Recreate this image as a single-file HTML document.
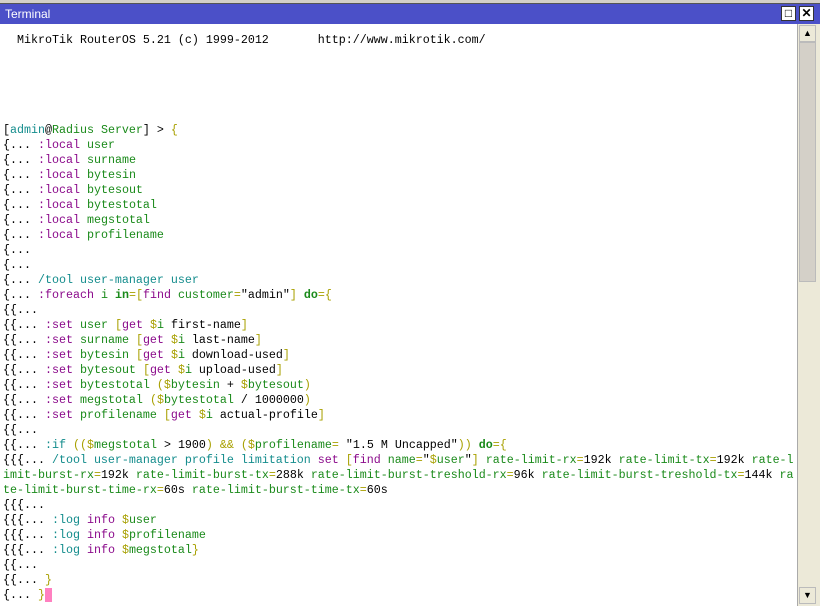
<!DOCTYPE html>
<html><head><meta charset="utf-8"><style>
*{margin:0;padding:0;box-sizing:border-box}
body{width:820px;height:606px;background:#ece9d8;position:relative;overflow:hidden;font-family:"Liberation Sans",sans-serif}
#top{position:absolute;left:0;top:0;width:820px;height:4px;background:#d4d0c8;border-bottom:1px solid #555}
#title{position:absolute;left:0;top:4px;width:820px;height:20px;background:#4b50c8;color:#fff;font-size:12px;line-height:20px;padding-left:5px}
.tb{position:absolute;top:6px;width:15px;height:15px;background:#fff;border:1px solid #333;font-size:12px;line-height:13px;text-align:center;color:#000;font-weight:bold}
#term{position:absolute;left:0;top:24px;width:797px;height:582px;background:#fff;padding:9px 0 0 3px;font-family:"Liberation Mono",monospace;font-size:11.67px;line-height:15px;white-space:pre;color:#000}
#sb{position:absolute;left:797px;top:24px;width:20px;height:582px;background:#ece9d8;border-left:1px solid #aaa}
.sbtn{position:absolute;left:1px;width:17px;height:17px;background:#ece9d8;border:1px solid #bbb;font-size:9px;text-align:center;line-height:15px}
#thumb{position:absolute;left:1px;top:18px;width:17px;height:240px;background:#d4d0c8;border:1px solid #bbb}
.p{color:#8b0a8b}.g{color:#1a8a1a}.t{color:#138c8c}.o{color:#a8a000}.b{font-weight:bold;color:#1a8a1a}
.cur{background:#ff80c0}
</style></head><body>
<div id="top"></div>
<div id="title">Terminal</div>
<div class="tb" style="left:781px">□</div>
<div class="tb" style="left:799px">✕</div>
<div id="term">  MikroTik RouterOS 5.21 (c) 1999-2012       http://www.mikrotik.com/





[<span class="t">admin</span>@<span class="g">Radius Server</span>] &gt; <span class="o">{</span>
{... <span class="p">:local</span> <span class="g">user</span>
{... <span class="p">:local</span> <span class="g">surname</span>
{... <span class="p">:local</span> <span class="g">bytesin</span>
{... <span class="p">:local</span> <span class="g">bytesout</span>
{... <span class="p">:local</span> <span class="g">bytestotal</span>
{... <span class="p">:local</span> <span class="g">megstotal</span>
{... <span class="p">:local</span> <span class="g">profilename</span>
{...
{...
{... <span class="t">/tool user-manager user</span>
{... <span class="p">:foreach</span> <span class="g">i</span> <span class="b">in</span><span class="o">=[</span><span class="p">find</span> <span class="g">customer</span><span class="o">=</span>"admin"<span class="o">]</span> <span class="b">do</span><span class="o">={</span>
{{...
{{... <span class="p">:set</span> <span class="g">user</span> <span class="o">[</span><span class="p">get</span> <span class="o">$</span><span class="g">i</span> first-name<span class="o">]</span>
{{... <span class="p">:set</span> <span class="g">surname</span> <span class="o">[</span><span class="p">get</span> <span class="o">$</span><span class="g">i</span> last-name<span class="o">]</span>
{{... <span class="p">:set</span> <span class="g">bytesin</span> <span class="o">[</span><span class="p">get</span> <span class="o">$</span><span class="g">i</span> download-used<span class="o">]</span>
{{... <span class="p">:set</span> <span class="g">bytesout</span> <span class="o">[</span><span class="p">get</span> <span class="o">$</span><span class="g">i</span> upload-used<span class="o">]</span>
{{... <span class="p">:set</span> <span class="g">bytestotal</span> <span class="o">(</span><span class="o">$</span><span class="g">bytesin</span> + <span class="o">$</span><span class="g">bytesout</span><span class="o">)</span>
{{... <span class="p">:set</span> <span class="g">megstotal</span> <span class="o">(</span><span class="o">$</span><span class="g">bytestotal</span> / 1000000<span class="o">)</span>
{{... <span class="p">:set</span> <span class="g">profilename</span> <span class="o">[</span><span class="p">get</span> <span class="o">$</span><span class="g">i</span> actual-profile<span class="o">]</span>
{{...
{{... <span class="t">:if</span> <span class="o">((</span><span class="o">$</span><span class="g">megstotal</span> &gt; 1900<span class="o">)</span> <span class="o">&amp;&amp;</span> <span class="o">(</span><span class="o">$</span><span class="g">profilename</span><span class="o">=</span> "1.5 M Uncapped"<span class="o">))</span> <span class="b">do</span><span class="o">={</span>
{{{... <span class="t">/tool user-manager profile limitation</span> <span class="p">set</span> <span class="o">[</span><span class="p">find</span> <span class="g">name</span><span class="o">=</span>"<span class="o">$</span><span class="g">user</span>"<span class="o">]</span> <span class="g">rate-limit-rx</span><span class="o">=</span>192k <span class="g">rate-limit-tx</span><span class="o">=</span>192k <span class="g">rate-l</span>
<span class="g">imit-burst-rx</span><span class="o">=</span>192k <span class="g">rate-limit-burst-tx</span><span class="o">=</span>288k <span class="g">rate-limit-burst-treshold-rx</span><span class="o">=</span>96k <span class="g">rate-limit-burst-treshold-tx</span><span class="o">=</span>144k <span class="g">ra</span>
<span class="g">te-limit-burst-time-rx</span><span class="o">=</span>60s <span class="g">rate-limit-burst-time-tx</span><span class="o">=</span>60s
{{{...
{{{... <span class="t">:log</span> <span class="p">info</span> <span class="o">$</span><span class="g">user</span>
{{{... <span class="t">:log</span> <span class="p">info</span> <span class="o">$</span><span class="g">profilename</span>
{{{... <span class="t">:log</span> <span class="p">info</span> <span class="o">$</span><span class="g">megstotal</span><span class="o">}</span>
{{...
{{... <span class="o">}</span>
{... <span class="o">}</span><span class="cur"> </span></div>
<div id="sb">
<div class="sbtn" style="top:1px">▲</div>
<div id="thumb"></div>
<div class="sbtn" style="top:563px">▼</div>
</div>
</body></html>
